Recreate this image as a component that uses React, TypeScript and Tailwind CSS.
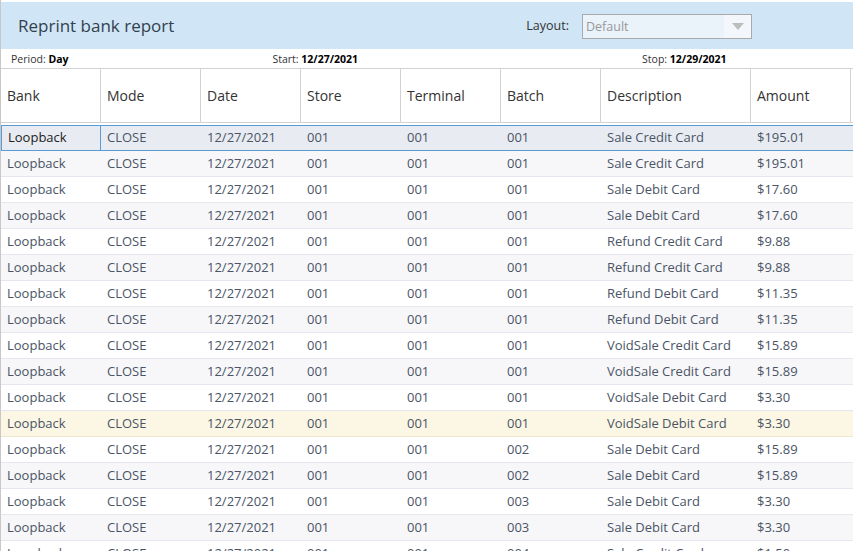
import React from 'react';

type Row = {
  bank: string;
  mode: string;
  date: string;
  store: string;
  terminal: string;
  batch: string;
  description: string;
  amount: string;
};

const mk = (batch: string, description: string, amount: string): Row => ({
  bank: 'Loopback',
  mode: 'CLOSE',
  date: '12/27/2021',
  store: '001',
  terminal: '001',
  batch,
  description,
  amount,
});

const rows: Row[] = [
  mk('001', 'Sale Credit Card', '$195.01'),
  mk('001', 'Sale Credit Card', '$195.01'),
  mk('001', 'Sale Debit Card', '$17.60'),
  mk('001', 'Sale Debit Card', '$17.60'),
  mk('001', 'Refund Credit Card', '$9.88'),
  mk('001', 'Refund Credit Card', '$9.88'),
  mk('001', 'Refund Debit Card', '$11.35'),
  mk('001', 'Refund Debit Card', '$11.35'),
  mk('001', 'VoidSale Credit Card', '$15.89'),
  mk('001', 'VoidSale Credit Card', '$15.89'),
  mk('001', 'VoidSale Debit Card', '$3.30'),
  mk('001', 'VoidSale Debit Card', '$3.30'),
  mk('002', 'Sale Debit Card', '$15.89'),
  mk('002', 'Sale Debit Card', '$15.89'),
  mk('003', 'Sale Debit Card', '$3.30'),
  mk('003', 'Sale Debit Card', '$3.30'),
  mk('004', 'Sale Credit Card', '$1.50'),
];

const columns: { key: keyof Row; label: string }[] = [
  { key: 'bank', label: 'Bank' },
  { key: 'mode', label: 'Mode' },
  { key: 'date', label: 'Date' },
  { key: 'store', label: 'Store' },
  { key: 'terminal', label: 'Terminal' },
  { key: 'batch', label: 'Batch' },
  { key: 'description', label: 'Description' },
  { key: 'amount', label: 'Amount' },
];

const GRID = 'grid grid-cols-[100px_100px_100px_100px_100px_100px_150px_100px_2px]';

export default function App() {
  return (
    <div
      className="w-[853px] h-[551px] overflow-hidden bg-white border-l border-[#c8c8c8] pt-[2px]"
      style={{ fontFamily: '"Open Sans", "Noto Sans", sans-serif' }}
    >
      {/* title band */}
      <div className="h-[47px] bg-[#d0e6f6] flex items-center">
        <h1 className="ml-[17px] text-[17px] text-[#333f4f] leading-none">Reprint bank report</h1>
        <div className="ml-auto mr-[101px] flex items-center mt-[1px]">
          <span className="text-[12.5px] text-[#333] mr-[13px]">Layout:</span>
          <div className="w-[170px] h-[25px] border border-[#aaaaaa] bg-[#eaf2fa] flex items-center">
            <span className="pl-[3px] text-[12.5px] text-[#999] mt-[2px]">Default</span>
            <div className="ml-auto w-[27px] h-full bg-[#f3f7fb] flex items-center justify-center">
              <svg width="12" height="7" viewBox="0 0 12 7">
                <path d="M0 0 L12 0 L6 7 Z" fill="#bdbdbd" />
              </svg>
            </div>
          </div>
        </div>
      </div>

      {/* period row */}
      <div className="h-[19px] flex items-center text-[10.5px] text-[#333] pt-[2px]">
        <span className="ml-[10px]">
          Period: <b className="text-black">Day</b>
        </span>
        <span className="ml-[204px]">
          Start: <b className="text-black">12/27/2021</b>
        </span>
        <span className="ml-[284px]">
          Stop: <b className="text-black">12/29/2021</b>
        </span>
      </div>

      {/* table header */}
      <div className={`${GRID} h-[55px] border-t border-b border-[#d2d2d2]`}>
        {columns.map((c) => (
          <div
            key={c.key}
            className="border-r border-[#d2d2d2] flex items-center pl-[6px] text-[14px] text-[#333]"
          >
            {c.label}
          </div>
        ))}
        <div />
      </div>

      {/* rows */}
      <div className="mt-[2px]">
        {rows.map((r, i) => {
          const selected = i === 0;
          const hover = i === 11;
          const bg = selected
            ? 'bg-[#e8ecf2] border-t border-b border-[#5b9bd5]'
            : hover
              ? 'bg-[#fbf7e4] border-b border-[#ece8d0]'
              : i % 2 === 1
                ? 'bg-[#f7f7f9] border-b border-[#e6e6ee]'
                : 'bg-white border-b border-[#e6e6ee]';
          return (
            <div key={i} className={`${GRID} h-[26px] ${bg}`}>
              {columns.map((c, ci) => (
                <div
                  key={c.key}
                  className={`flex items-center pl-[6px] text-[13px] whitespace-nowrap ${
                    selected && ci === 0
                      ? 'border-x border-[#5b9bd5] text-[#222] pl-[5px]'
                      : 'text-[#4a5466]'
                  }`}
                >
                  {r[c.key]}
                </div>
              ))}
              <div />
            </div>
          );
        })}
      </div>
    </div>
  );
}
